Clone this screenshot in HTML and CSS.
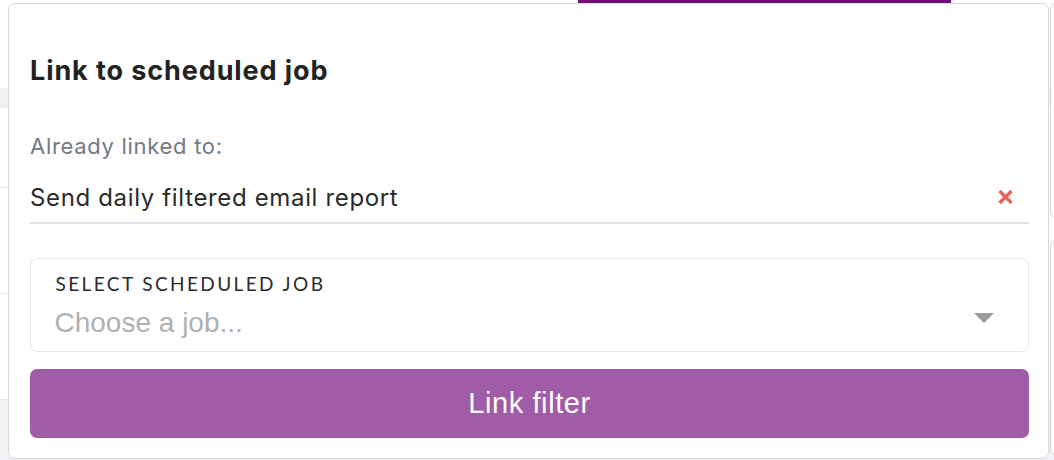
FILE: index.html
```html
<!DOCTYPE html>
<html lang="en">
<head>
<meta charset="utf-8">
<title>Link to scheduled job</title>
<link rel="stylesheet" href="styles.css">
</head>
<body>
<div class="page">
  <div class="tabs"><span class="tab-active"></span></div>
  <div class="rows">
    <div class="row row-head"></div>
    <div class="row"></div>
    <div class="row"></div>
    <div class="row row-foot"></div>
  </div>
  <div class="side-cards">
    <div class="side-card"></div>
    <div class="side-card"></div>
  </div>
</div>

<section class="popover">
  <h2 class="popover-title">Link to scheduled job</h2>
  <p class="linked-label">Already linked to:</p>
  <div class="linked-item">
    <span class="linked-name">Send daily filtered email report</span>
    <button class="unlink" type="button" aria-label="Unlink">
      <svg width="15" height="14" viewBox="0 0 15 14"><path d="M1.5 1L13.5 13M13.5 1L1.5 13" stroke="#e8625a" stroke-width="3.4" stroke-linecap="butt"/></svg>
    </button>
  </div>
  <div class="select-field">
    <span class="select-label">Select scheduled job</span>
    <div class="select-control">
      <span class="select-placeholder">Choose a job...</span>
      <span class="select-caret"></span>
    </div>
  </div>
  <button class="primary-btn" type="button">Link filter</button>
</section>
</body>
</html>
```
FILE: styles.css
```css
* { box-sizing: border-box; }

html, body {
  margin: 0;
  padding: 0;
  background: #ffffff;
  font-family: Inter, "Noto Sans", sans-serif;
}

.page {
  position: relative;
  width: 1054px;
  height: 460px;
  overflow: hidden;
}

/* header tabs behind the popover */
.tabs {
  height: 4px;
  display: flex;
  padding-left: 578px;
}
.tab-active {
  width: 373px;
  height: 4px;
  background: #6e1177;
}

/* table rows behind the popover */
.rows {
  display: flex;
  flex-direction: column;
  padding-top: 84px;
}
.row {
  height: 106px;
  border-bottom: 1px solid #e6e8eb;
}
.row-head {
  height: 100px;
  border-top: 20px solid #eef1f4;
}
.row-foot {
  background: #f0f2f5;
  border-bottom: 0;
}

.side-cards {
  position: absolute;
  left: 1050px;
  top: 3px;
  display: flex;
  flex-direction: column;
  gap: 22px;
}
.side-card {
  width: 40px;
  height: 215px;
  border: 1.5px solid #d6d6d6;
  border-radius: 6px;
  background: #fff;
}

/* popover */
.popover {
  position: absolute;
  left: 8px;
  top: 3px;
  width: 1041px;
  height: 456px;
  background: #fff;
  border: 1.5px solid #d9d9d9;
  border-radius: 7px;
  padding: 50.5px 19px 0 21px;
  display: flex;
  flex-direction: column;
}

.popover-title {
  margin: 0;
  font-size: 27px;
  line-height: 32px;
  font-weight: 700;
  letter-spacing: 0.9px;
  color: #222;
}

.linked-label {
  margin: 46px 0 0;
  font-size: 22px;
  line-height: 26px;
  letter-spacing: 0.7px;
  color: #727a83;
}

.linked-item {
  margin-top: 24px;
  display: flex;
  align-items: center;
  justify-content: space-between;
  border-bottom: 2px solid #dfe3e8;
  padding-bottom: 10px;
}
.linked-name {
  font-size: 24px;
  line-height: 29px;
  letter-spacing: 0.65px;
  color: #2a2a2a;
}
.unlink {
  border: 0;
  background: none;
  padding: 0;
  margin-right: 16px;
  display: flex;
}

.select-field {
  margin-top: 34px;
  height: 94px;
  border: 1.5px solid #e8e8e8;
  border-radius: 7px;
  padding: 14px 34px 0 23.5px;
  display: flex;
  flex-direction: column;
}
.select-label {
  font-family: Lato, "Noto Sans", sans-serif;
  font-size: 19px;
  line-height: 22px;
  text-transform: uppercase;
  letter-spacing: 2.4px;
  color: #2b2b2b;
  padding-left: 1px;
}
.select-control {
  display: flex;
  align-items: flex-start;
  justify-content: space-between;
  margin-top: 12px;
}
.select-placeholder {
  font-family: "Liberation Sans", Arial, sans-serif;
  font-size: 28px;
  line-height: 32px;
  color: #b0b0b0;
}
.select-caret {
  margin-top: 6px;
  width: 0;
  height: 0;
  border-left: 10px solid transparent;
  border-right: 10px solid transparent;
  border-top: 10px solid #9b9b9b;
}

.primary-btn {
  margin-top: 17px;
  height: 69px;
  border: 0;
  border-radius: 7px;
  background: #a05ca7;
  color: #fff;
  font-family: "Liberation Sans", Arial, sans-serif;
  font-size: 29px;
  letter-spacing: 0.6px;
}
```
